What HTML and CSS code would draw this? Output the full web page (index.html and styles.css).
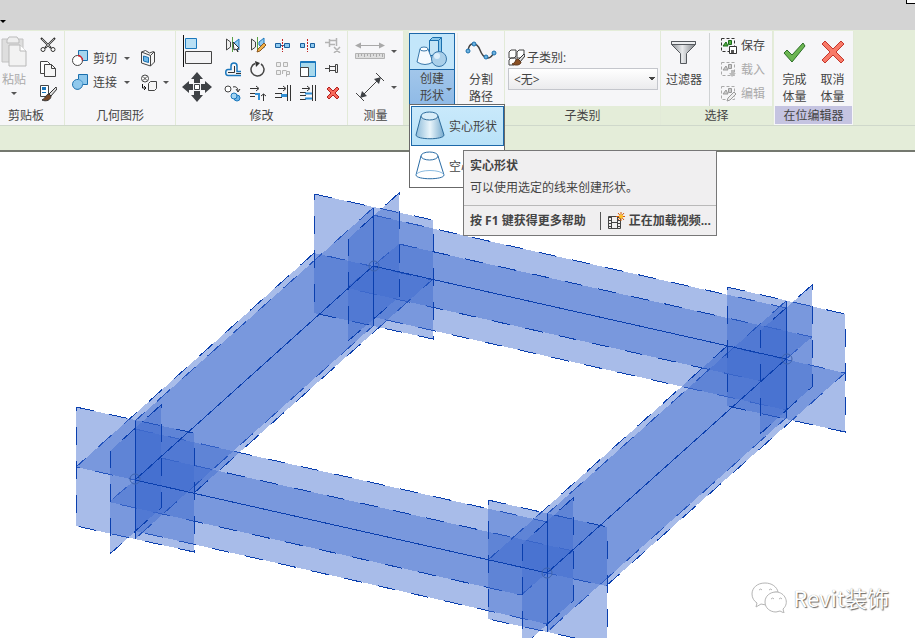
FILE: index.html
```
<!DOCTYPE html>
<html lang="zh-CN">
<head>
<meta charset="utf-8">
<meta name="viewport" content="width=device-width, initial-scale=1">
<title>Revit</title>
<link rel="stylesheet" href="styles.css">
</head>
<body>

<header class="titlebar">
	<span class="arrow"></span>
	<span class="search_box"></span>
</header>

<nav class="ribbon">
	<section class="panel clipboard">
		<div class="body">
			<button class="big paste off">
				<svg width="28" height="32" viewBox="0 0 28 32"><path d="M2 4h21v23H2z" fill="#dedede" stroke="#c2c2c2"/><path d="M7 5l2-3h8l2 3v3H7z" fill="#eee" stroke="#bbb"/><path d="M9 10h11l6 6v15H9z" fill="#f2f2f2" stroke="#b8b8b8"/><path d="M20 10v6h6" fill="#fff" stroke="#b8b8b8"/></svg>
				<span>粘贴</span><i class="arrow"></i>
			</button>
			<div class="tools one">
				<button aria-label="剪切到剪贴板"><svg width="18" height="18" viewBox="0 0 18 18"><path d="M2 2l10 10M16 2L6 12" stroke="#333" stroke-width="2"/><path d="M3 3l8 8M15 3l-8 8" stroke="#ddd" stroke-width=".7"/><circle cx="4" cy="13.500" r="2" fill="#fff" stroke="#333"/><circle cx="14" cy="13.500" r="2" fill="#fff" stroke="#333"/></svg></button>
				<button aria-label="复制到剪贴板"><svg width="18" height="18" viewBox="0 0 18 18"><path d="M1.500 1.500h7l3 3v9h-10z" fill="#fff" stroke="#444"/><path d="M5.500 4.500h7l4 4v8h-11z" fill="#f6f6f6" stroke="#444"/><path d="M12.500 4.500v4h4" fill="none" stroke="#444"/></svg></button>
				<button aria-label="匹配类型"><svg width="18" height="18" viewBox="0 0 18 18"><path d="M1.500 1.500h8v11h-8z" fill="#fff" stroke="#444"/><path d="M3 3h4v3H3zM3 8h4v1H3z" fill="#1672b8"/><path d="M17 3l-7 7 2 2 6-7z" fill="#ddd" stroke="#333"/><path d="M10 10c-3 0-3 4-7 6 4 2 9 0 9-4z" fill="#7a4a28" stroke="#333"/></svg></button>
			</div>
		</div>
		<h2>剪贴板</h2>
	</section>

	<section class="panel geometry">
		<div class="body">
			<div class="rows">
				<button><svg width="17" height="17" viewBox="0 0 17 17"><path d="M6.500.500h9v10h-9z" fill="#a5d5ee" stroke="#1b6fad"/><circle cx="5.500" cy="10.500" r="5" fill="#fff" stroke="#444"/><path d="M6 5.500a5 5 0 0 1 4.500 5" fill="none" stroke="#d3202c" stroke-width="1.500"/></svg><span>剪切</span><i class="arrow"></i></button>
				<button><svg width="17" height="17" viewBox="0 0 17 17"><path d="M6.500.500h9v10h-5a5 5 0 1 1-4-5z" fill="#8fc8ec" stroke="#1b6fad"/><path d="M6 5.500a5 5 0 0 1 5 5" fill="none" stroke="#4d9bd0"/></svg><span>连接</span><i class="arrow"></i></button>
			</div>
			<div class="rows second">
				<button aria-label="洞口"><svg width="16" height="17" viewBox="0 0 16 17"><path d="M1.500 2l4-1.500 4 2.500 4-1.500 1 .5v10l-4 4-9-3z" fill="#f5f5f5" stroke="#444"/><path d="M10.500 16V5.500L14 2M1.500 2l9 3.500" fill="none" stroke="#444"/><path d="M3.500 6l5 1.500v5l-5-1.500z" fill="#6db8e8" stroke="#1b6fad"/></svg></button>
				<button aria-label="拆除"><svg width="18" height="18" viewBox="0 0 18 18"><circle cx="5" cy="4.500" r="3.500" fill="#fff" stroke="#444"/><path d="M3 2.500l4 4M7 2.500l-4 4" stroke="#444"/><path d="M2.500 10v4h3M4 12l2 2-2 2" fill="none" stroke="#111"/><path d="M8.500 9.500l2-2h6v7l-2 2h-6z" fill="#f5f5f5" stroke="#444"/></svg><i class="arrow"></i></button>
			</div>
		</div>
		<h2>几何图形</h2>
	</section>

	<section class="panel modify">
		<div class="body">
			<div class="rows tall">
				<button aria-label="对齐"><svg width="32" height="32" viewBox="0 0 32 32"><path d="M1.500 0v32" stroke="#111"/><path d="M3.500 3.500h11v10h-11z" fill="#b9e0f5" stroke="#1b78bd"/><path d="M3.500 16.500h26v12h-26z" fill="#f3f3f5" stroke="#444"/></svg></button>
				<button aria-label="移动"><svg width="30" height="30" viewBox="0 0 30 30"><path d="M15 0l6 7h-3v4h-6V7H9zM15 30l6-7h-3v-4h-6v4H9zM0 15l7-6v3h4v6H7v3zM30 15l-7-6v3h-4v6h4v3z" fill="#3f4246"/><path d="M12.500 12.500h5v5h-5z" fill="#fff" stroke="#3f4246"/></svg></button>
			</div>
			<div class="tools five">
				<button aria-label="镜像 - 拾取轴"><svg width="16" height="16" viewBox="0 0 16 16"><path d="M1.500 2v11l4-3V5z" fill="#eee" stroke="#444"/><path d="M7.500 0v15" stroke="#57a044"/><path d="M14 2v11L9 9V6z" fill="#8fcaf0" stroke="#1b78bd"/><path d="M8 5l6 6-2 1 1 3-2-3-2 1z" fill="#fff" stroke="#333"/></svg></button>
				<button aria-label="镜像 - 绘制轴"><svg width="16" height="16" viewBox="0 0 16 16"><path d="M1.500 2v11l4-3V5z" fill="#eee" stroke="#444"/><path d="M7.500 0v15" stroke="#57a044"/><path d="M14 1v10L9 8V5z" fill="#8fcaf0" stroke="#1b78bd"/><path d="M7 15l1-3 6-6 2 2-6 6z" fill="#f3b34c" stroke="#8d5921"/></svg></button>
				<button aria-label="拆分图元"><svg width="16" height="16" viewBox="0 0 16 16"><path d="M.5 6.500h5v4h-5zM9.500 6.500h5v4h-5z" fill="#8fcaf0" stroke="#1b5f9d"/><path d="M5 8.500h5" stroke="#1b5f9d"/><path d="M7.500 2v13" stroke="#c02020" stroke-dasharray="2 1"/></svg></button>
				<button aria-label="用间隙拆分"><svg width="16" height="16" viewBox="0 0 16 16"><path d="M.5 6.500h4v4h-4zM10.500 6.500h4v4h-4z" fill="#8fcaf0" stroke="#1b5f9d"/><path d="M7.500 2v13" stroke="#c02020" stroke-dasharray="2 1"/></svg></button>
				<button aria-label="解锁"><svg width="16" height="16" viewBox="0 0 16 16"><path d="M0 5.500h4M4.500 2v8M5 3.500h6M5 7.500h5M11.500 1v8M9 10l6 6M15 10l-6 6" fill="none" stroke="#b3b3b3" stroke-width="1.500"/></svg></button>
				<button aria-label="偏移"><svg width="16" height="16" viewBox="0 0 16 16"><path d="M16 10.500h-4V5c0-4-6-4-6 0v3.500H3c-3 0-3 6 0 6h13" fill="none" stroke="#1b78bd" stroke-width="1.500"/><path d="M9.500 5v6.500H3M16 12.500h-5" fill="none" stroke="#333"/></svg></button>
				<button aria-label="旋转"><svg width="16" height="16" viewBox="0 0 16 16"><path d="M11 3a6.500 6.500 0 1 1-6-.5" fill="none" stroke="#444" stroke-width="1.500"/><path d="M5 0l5 2-4 4z" fill="#333"/></svg></button>
				<button aria-label="阵列"><svg width="16" height="16" viewBox="0 0 16 16"><path d="M1.500 1.500h4v4h-4zM8.500 1.500h4v4h-4zM1.500 9.500h4v4h-4zM7.500 13V9.500h4M11.500 15.500v-5h3v3h-3" fill="#eee" stroke="#b3b3b3"/></svg></button>
				<button aria-label="缩放"><svg width="16" height="16" viewBox="0 0 16 16"><path d="M.5.500h15v15H.5z" fill="#a8d9ed" stroke="#1b78bd"/><path d="M0 1.500h16" stroke="#1b78bd"/><path d="M.5 6.500h8v9h-8z" fill="#fff" stroke="#444"/></svg></button>
				<button aria-label="锁定"><svg width="16" height="16" viewBox="0 0 16 16"><path d="M0 7.500h4M4.500 4v7M5 5.500h5M5 9.500h5M10.500 3.500v8h2v-8z" fill="#eee" stroke="#444"/></svg></button>
				<button aria-label="复制"><svg width="17" height="17" viewBox="0 0 17 17"><circle cx="4" cy="4" r="3" fill="#fff" stroke="#444"/><path d="M9 2c3-1 5 1 5 4M12 4l2 3 2-3" fill="none" stroke="#333"/><circle cx="13" cy="13" r="3" fill="#6eb5e8" stroke="#1b78bd"/><circle cx="10" cy="11" r="3" fill="#a5d5f2" stroke="#1b78bd"/></svg></button>
				<button aria-label="修剪/延伸为角"><svg width="16" height="16" viewBox="0 0 16 16"><path d="M0 3.500h8M6 1l3 2.500L6 6M13.500 16V9M11 11l2.500-2 2.500 2M0 8.500h5M0 11.500h5" fill="none" stroke="#333"/><path d="M5 9h4v6" fill="none" stroke="#3290d5" stroke-width="2"/></svg></button>
				<button aria-label="修剪/延伸单个图元"><svg width="16" height="16" viewBox="0 0 16 16"><path d="M3 3.500h7M8 1l3 2.500L8 6M15.500 0v16M12.500 0v16M0 8.500h7M0 12.500h7" fill="none" stroke="#333"/><path d="M6 10.500h6" stroke="#3290d5" stroke-width="3"/></svg></button>
				<button aria-label="修剪/延伸多个图元"><svg width="16" height="16" viewBox="0 0 16 16"><path d="M2 3.500h7M7 1l3 2.500L7 6M15.500 0v16M12.500 0v16M0 7.500h6M0 10.500h6M0 14.500h6" fill="none" stroke="#333"/><path d="M5 8.500h7M5 13.500h7" stroke="#3290d5" stroke-width="2"/></svg></button>
				<button aria-label="删除"><svg width="14" height="14" viewBox="0 0 14 14"><path d="M1 3l2-2 4 4 4-4 2 2-4 4 4 4-2 2-4-4-4 4-2-2 4-4z" fill="#f76a5c" stroke="#b31f1f"/></svg></button>
			</div>
		</div>
		<h2>修改</h2>
	</section>

	<section class="panel measure">
		<div class="body">
			<div class="rows tall">
				<button class="off" aria-label="测量"><svg width="30" height="20" viewBox="0 0 30 20"><path d="M2 4.500h26" stroke="#a9a9a9"/><path d="M0 4.500l6-3v6zM30 4.500l-6-3v6z" fill="#a9a9a9"/><path d="M.5 12.500h29v5H.5z" fill="#dedede" stroke="#b3b3b3"/><path d="M3.500 13v3M6.500 13v2M9.500 13v3M12.500 13v2M15.500 13v3M18.500 13v2M21.500 13v3M24.500 13v2M27.500 13v3" stroke="#aaa"/></svg><i class="arrow"></i></button>
				<button aria-label="尺寸标注"><svg width="30" height="30" viewBox="0 0 30 30"><path d="M6 25L25 6M1 21l8 8M21 1l8 8" stroke="#444"/><path d="M5 26l2-7 5 5zM26 5l-7 2 5 5z" fill="#3f4246"/></svg><i class="arrow"></i></button>
			</div>
		</div>
		<h2>测量</h2>
	</section>

	<section class="panel context create">
		<div class="body">
			<button class="big shape" aria-expanded="true">
				<span class="pic"><svg width="32" height="32" viewBox="0 0 32 32"><path d="M13.500 4.500l3-3h9v15l-3 3h-9z" fill="#8cc8ea" stroke="#1b6fad"/><path d="M14 5h8v14h-8z" fill="#c4e4f5"/><path d="M13.500 4.500h9v15M22.500 4.500l3-3" fill="none" stroke="#1b6fad"/><path d="M4 13h8l5 13q-8 5-16 0z" fill="#f5fafe" stroke="#3a78aa"/><ellipse cx="8" cy="13" rx="4" ry="2" fill="#fff" stroke="#3a78aa"/><circle cx="23" cy="23" r="7.500" fill="#a9cfe9" stroke="#3a78aa"/><circle cx="21" cy="20" r="3" fill="#dceefa"/></svg></span>
				<span class="label">创建<br>形状</span><i class="arrow"></i>
			</button>
			<button class="big split">
				<svg width="32" height="32" viewBox="0 0 32 32"><path d="M3 16c1-10 9-9 12-1s10 12 14 2" fill="none" stroke="#444" stroke-width="1.500"/><g fill="#6db2df" stroke="#1b6fad"><circle cx="3" cy="16" r="2"/><circle cx="9" cy="9" r="2"/><circle cx="21" cy="22" r="2"/><circle cx="29" cy="18" r="2"/></g></svg>
				<span>分割<br>路径</span>
			</button>
		</div>
		<h2></h2>
		<div class="menu">
			<button class="on"><svg width="30" height="32" viewBox="0 0 30 32"><defs><linearGradient id="cone"><stop offset="0" stop-color="#8dbbd9"/><stop offset=".5" stop-color="#e9f5fb"/><stop offset="1" stop-color="#76aacd"/></linearGradient></defs><path d="M6 6L1 25c0 5 28 5 28 0L23 6z" fill="url(#cone)" stroke="#2d6c9c"/><ellipse cx="14.500" cy="6" rx="8.500" ry="4" fill="#d8edf9" stroke="#2d6c9c"/></svg><span>实心形状</span></button>
			<button><svg width="30" height="32" viewBox="0 0 30 32"><path d="M6 6L1 25c0 5 28 5 28 0L23 6z" fill="#fff" stroke="#2a6ca5"/><path d="M1 25c2-6 26-6 28 0" fill="none" stroke="#8dbce0"/><ellipse cx="14.500" cy="6" rx="8.500" ry="4" fill="#fff" stroke="#2a6ca5"/></svg><span>空心形状</span></button>
			<div class="tip" role="tooltip">
				<div class="msg"><b>实心形状</b><p>可以使用选定的线来创建形状。</p></div>
				<div class="control"><span>按 F1 键获得更多帮助</span><span class="video"><svg width="17" height="18" viewBox="0 0 17 18"><path d="M.5 4.500h12v12H.5z" fill="#f0eff0" stroke="#444"/><path d="M3.500 4v13M9.500 4v13M4 10.500h5" stroke="#444"/><path d="M2 5v12M11 5v12" stroke="#444" stroke-width="2" stroke-dasharray="1 2"/><path d="M13 0v9M8 4.500h9M10 1l6 7M16 1l-6 7" stroke="#d45c08"/><circle cx="13" cy="4.500" r="2" fill="#ffc229"/></svg>正在加载视频...</span></div>
			</div>
		</div>
	</section>

	<section class="panel context subcat">
		<div class="body">
			<label for="subcat"><svg width="17" height="17" viewBox="0 0 17 17"><path d="M1 3l2-2h5v6l-2 2H1zM9 3l2-2h5v6l-2 2H9zM1 11l2-2h5v5l-2 2H1z" fill="#fff" stroke="#444"/><path d="M16 5l-6 6 2 2 5-6z" fill="#ddd" stroke="#333"/><path d="M10 10c-3 0-2 4-6 5 4 2 9 1 9-2z" fill="#8a4f24" stroke="#5b351a"/></svg>子类别:</label>
			<select id="subcat"><option>&lt;无&gt;</option></select>
		</div>
		<h2>子类别</h2>
	</section>

	<section class="panel context choose">
		<div class="body">
			<button class="big filter">
				<svg width="28" height="26" viewBox="0 0 28 26"><defs><linearGradient id="metal"><stop offset="0" stop-color="#8b8f94"/><stop offset=".45" stop-color="#e8eaec"/><stop offset="1" stop-color="#7c8085"/></linearGradient></defs><path d="M1.500 2.500h24v3l-9 9v10h-6v-10l-9-9z" fill="url(#metal)" stroke="#55595e"/><path d="M1.500 2.500h24v3h-24z" fill="#eceef0" stroke="#55595e"/></svg>
				<span>过滤器</span>
			</button>
			<div class="list">
				<button><svg width="17" height="17" viewBox="0 0 17 17"><path d="M1.500 1.500h13v13h-13z" fill="none" stroke="#333" stroke-dasharray="3 2"/><path d="M3 9l3-4 2 4zM8.500 3.500h3v4h-3z" fill="#4fae3e" stroke="#1b6a1b"/><path d="M9.500 9.500h7v7h-7z" fill="#fff" stroke="#333"/><path d="M11 13h3v3h-3z" fill="#555"/></svg>保存</button>
				<button class="off"><svg width="17" height="17" viewBox="0 0 17 17"><path d="M1.500 1.500h13v13h-13z" fill="none" stroke="#aaa" stroke-dasharray="3 2"/><path d="M3 9l3-4 2 4zM8.500 3.500h3v4h-3z" fill="#ccc" stroke="#999"/><path d="M11 9h3v3h2l-4 4-3-4h2z" fill="#bbb"/></svg>载入</button>
				<button class="off"><svg width="17" height="17" viewBox="0 0 17 17"><path d="M1.500 1.500h13v13h-13z" fill="none" stroke="#aaa" stroke-dasharray="3 2"/><path d="M3 9l3-4 2 4zM8.500 3.500h3v4h-3z" fill="#ccc" stroke="#999"/><path d="M7 16l1-3 6-6 2 2-6 6z" fill="#eee" stroke="#999"/></svg>编辑</button>
			</div>
		</div>
		<h2>选择</h2>
	</section>

	<section class="panel context editor">
		<div class="body">
			<button class="big"><svg width="24" height="24" viewBox="0 0 24 24"><path d="M1 13l3-3 5 5L20 3l2 3L9 22z" fill="#6cb552" stroke="#2d6f28"/></svg><span>完成<br>体量</span></button>
			<button class="big"><svg width="24" height="24" viewBox="0 0 24 24"><path d="M1 4l3-3 8 8 8-8 3 3-8 8 8 8-3 3-8-8-8 8-3-3 8-8z" fill="#f87a68" stroke="#c4362c"/></svg><span>取消<br>体量</span></button>
		</div>
		<h2>在位编辑器</h2>
	</section>
</nav>
<div class="options"></div>

<main class="view">
	<svg class="model" viewBox="0 152 915 486" preserveAspectRatio="xMinYMin slice">
		<!-- work planes along each line: vertical, then horizontal -->
		<g class="plane">
			<path d="M373 215L786 308V410L373 317z"/>
			<path d="M399 244L812 337L760 381L347 288z"/>
			<path d="M135 429L547 522V624L135 531z"/>
			<path d="M161 458L573 551L521 595L109 502z"/>
			<path d="M373 208L135 421V539L373 326z"/>
			<path d="M314 253L76 467L194 493L432 280z"/>
			<path d="M786 301L547 514V632L786 418z"/>
			<path d="M727 346L488 560L606 586L845 373z"/>
		</g>
		<!-- planes across the line ends -->
		<g class="plane">
			<path d="M314 194L433 220V339L314 313z"/>
			<path d="M399 193L348 239V341L399 297z"/>
			<path d="M727 287L845 314V432L727 406z"/>
			<path d="M812 285L760 331V434L812 387z"/>
			<path d="M76 407L194 433V552L76 526z"/>
			<path d="M161 405L110 451V554L161 508z"/>
			<path d="M488 500L607 527V645L488 619z"/>
			<path d="M573 498L522 544V647L573 601z"/>
		</g>
		<g class="line">
			<path d="M373 266L786 359L547 573L135 480z"/>
			<path d="M373 208V326M786 301V418M135 421V539M547 514V632"/>
		</g>
		<g class="node">
			<circle cx="374" cy="266" r="5"/><circle cx="787" cy="359" r="5"/><circle cx="547" cy="573" r="5"/><circle cx="135" cy="479" r="5"/>
		</g>
	</svg>
	<div class="watermark">
		<svg width="36" height="32" viewBox="0 0 36 32"><path d="M14 2C6 2 1 7 1 13c0 4 2 7 5 9l-1 4 5-3 5 1c-1-8 4-13 12-13C26 6 21 2 14 2z"/><path d="M25 11c-6 0-11 4-11 10s5 10 11 10l4-1 4 2-1-4c7-6 2-17-7-17z"/><path d="M8 9q2-2 3 0M18 9q2-2 3 0M20 18q2-2 3 0M28 18q2-2 3 0"/></svg>
		<span>Revit装饰</span>
	</div>
</main>

</body>
</html>
```
FILE: styles.css
```
* {box-sizing:border-box;}
body {margin:0;height:100vh;display:flex;flex-direction:column;overflow:hidden;background:#fff;color:#444;
	font:12px/17px "Open Sans","Noto Sans CJK SC",sans-serif;}
button {display:flex;align-items:center;padding:0;margin:0;border:0;background:none;color:inherit;font:inherit;white-space:nowrap;}
svg {display:block;flex:none;}
h2 {margin:0;height:19px;font-size:12px;line-height:20px;font-weight:400;text-align:center;white-space:nowrap;}
p {margin:0;}

.titlebar {display:flex;flex:none;justify-content:space-between;height:30px;background:#d4d4d4;}
.titlebar .arrow {margin-top:20px;border-top-color:#000;}
.search_box {width:9px;height:4px;border:1px solid #000;border-width:0 0 1px 1px;background:#fff;}
.arrow {flex:none;width:0;height:0;border:3px solid transparent;border-top-color:#555;border-bottom:0;}
.off {color:#aaa;}

/* ribbon */
.ribbon {display:flex;flex:none;height:96px;padding-top:1px;background:#e4edd9;border-bottom:1px solid #cfd8cb;}
.panel {position:relative;flex:none;display:flex;flex-direction:column;border-right:1px solid #e2ead8;background:#f6f6f8;}
.panel .body {display:flex;flex:none;height:75px;padding-top:2px;}
.context h2 {background:#e4edd9;}
.big {flex-direction:column;}
.tools {display:grid;grid-auto-rows:24px;}
.tools button {justify-content:center;}
.five {grid-template-columns:repeat(5,25px);}
.rows {display:grid;grid-auto-rows:24px;align-content:center;}
.tall {grid-auto-rows:36px;align-content:start;}

.clipboard {width:65px;}
.clipboard h2 {padding-right:12px;}
.paste {width:28px;padding-top:2px;}
.paste span {margin:4px 0;}
.one {width:36px;margin-left:4px;}
.geometry {width:111px;}
.geometry .body {padding-left:7px;}
.geometry .rows {height:75px;}
.geometry .rows span {margin:0 7px 0 4px;}
.second {margin-left:10px;}
.second .arrow {margin-left:5px;}
.modify {width:172px;}
.modify .body {padding-left:6px;}
.modify .rows {width:38px;}
.measure {width:56px;}
.measure .body {padding-left:7px;}
.measure .arrow {margin-left:6px;}

.create {width:101px;border-left:5px solid #e4edd9;}
.create .split {width:47px;margin-left:2px;padding-top:2px;border-left:1px solid #ebebe6;}
.create .split span {margin-top:4px;}
.shape {position:relative;width:46px;height:73px;border:1px solid #1c68a9;background:linear-gradient(#b5d3ef,#8fbae6);}
.shape .pic {display:flex;justify-content:center;align-items:center;width:100%;height:36px;border-bottom:1px solid #1c68a9;background:#c3e6fa;}
.shape .label {line-height:17px;}
.shape .arrow {position:absolute;right:2px;bottom:14px;}
.subcat {width:156px;}
.subcat .body {flex-direction:column;padding:16px 2px 0 3px;}
.subcat label {display:flex;align-items:center;gap:2px;height:20px;}
.subcat select {width:100%;height:22px;margin-top:1px;padding:0 5px;border:1px solid #c4c6cc;color:inherit;font:inherit;appearance:none;
	background:linear-gradient(135deg,#444 50%,transparent 50%) right 1px top 8px/4px 4px no-repeat,
	linear-gradient(225deg,#444 50%,transparent 50%) right 5px top 8px/4px 4px no-repeat,linear-gradient(#fff,#ebebed);}
.choose {width:112px;}
.filter {width:46px;padding-top:6px;}
.filter span {margin-top:6px;}
.list {display:grid;grid-template-rows:repeat(3,24px);margin-left:2px;padding-left:10px;border-left:1px solid #cfd2d4;}
.list svg {margin-right:4px;}
.editor {width:81px;border-left:1px solid #e4edd9;}
.editor .big {width:38px;padding-top:7px;}
.editor .body {justify-content:center;}
.editor span {margin-top:7px;}
.editor h2 {margin:0 1px;height:18px;background:#c5c4e1;}
.options {flex:none;height:26px;background:#e4edd9;border-bottom:2px solid #74786f;}

/* drop-down under the create button, with its tooltip */
.menu {position:absolute;left:0;top:73px;z-index:2;width:96px;padding:1px;border:1px solid #686868;background:#fff;}
.menu button {width:93px;height:40px;padding-left:3px;border:1px solid transparent;}
.menu button span {margin-left:4px;}
.menu .on {border-color:#1c68a9;background:linear-gradient(#c9e9fb,#b9e2f8);}
.tip {position:absolute;left:53px;top:45px;width:254px;border:1px solid #777;background:#f0eff0;}
.tip .msg {padding:5px 6px 6px;line-height:22px;border-bottom:1px solid #b9b9b9;}
.tip .msg b {display:block;line-height:20px;}
.tip .msg p {margin-top:1px;}
.tip .control {display:flex;align-items:center;height:29px;padding:0 6px;font-weight:700;white-space:nowrap;}
.video {display:flex;align-items:center;gap:4px;margin-left:14px;padding-left:7px;border-left:1px solid #555;}

/* 3D view */
.view {position:relative;flex:1;min-height:0;background:#fff;}
.model {width:100%;height:100%;}
.plane path {fill:rgba(66,110,208,.46);stroke:#0a3fae;stroke-width:1;stroke-dasharray:18 16;shape-rendering:crispEdges;}
.line {fill:none;stroke:#0a3fae;shape-rendering:crispEdges;}
.node {fill:none;stroke:#3f64ad;}
.watermark {position:absolute;right:26px;bottom:25px;display:flex;align-items:center;gap:6px;
	color:#fff;font:22px/32px "Noto Sans CJK SC",sans-serif;text-shadow:1px 1px 1px #666,0 0 1px #999;}
.watermark path {fill:#fff;stroke:#b5b5b5;}
```
